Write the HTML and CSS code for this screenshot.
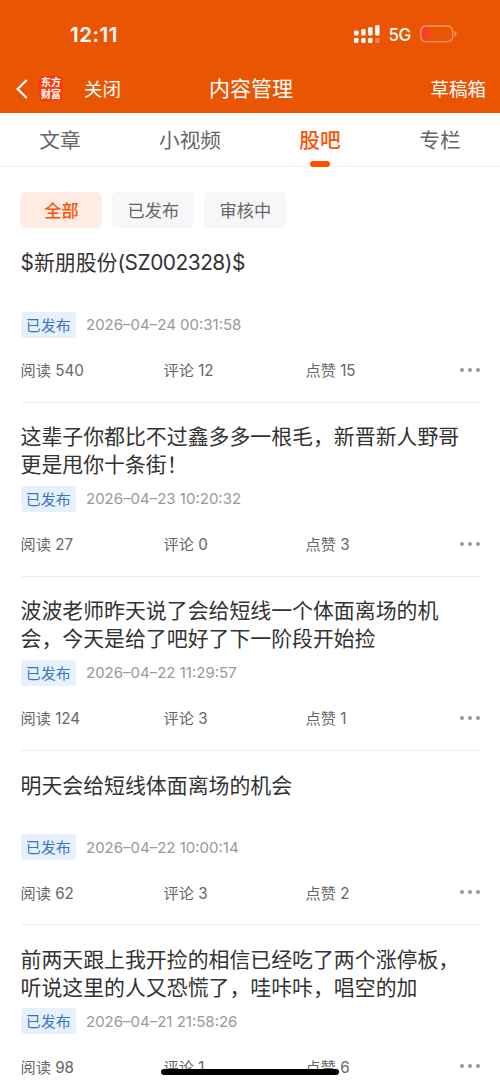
FILE: index.html
```html
<!DOCTYPE html>
<html lang="zh-CN">
<head>
    <meta charset="UTF-8">
    <meta name="viewport" content="width=device-width, initial-scale=1.0">
    <title>内容管理</title>
    <link rel="stylesheet" href="styles.css">
</head>
<body>
    <!-- Header Section -->
    <header>
        <div class="status-bar">
            <span class="time">12:11</span>
            <div class="status-icons">
                <svg class="signal" width="26" height="18" viewBox="0 0 26 18" fill="#fff">
                    <rect x="0" y="5.5" width="4.5" height="5" rx="1"/>
                    <rect x="7.3" y="4" width="4.3" height="6.5" rx="1"/>
                    <rect x="14.2" y="2.2" width="4.3" height="8.3" rx="1"/>
                    <rect x="21.2" y="0" width="4.3" height="10.5" rx="1"/>
                    <rect x="0" y="13" width="4.5" height="5" rx="1.2"/>
                    <rect x="7.3" y="13" width="4.3" height="5" rx="1.2"/>
                    <rect x="14.2" y="13" width="4.3" height="5" rx="1.2"/>
                    <rect x="21.2" y="13" width="4.3" height="5" rx="1.2" opacity="0.3"/>
                </svg>
                <span class="network">5G</span>
                <svg class="battery" width="38" height="18" viewBox="0 0 38 18">
                    <rect x="0.7" y="1" width="32" height="15.6" rx="5" fill="none" stroke="#f79a68" stroke-width="1.3"/>
                    <path d="M5 3h4v11.6H5a2.5 2.5 0 0 1-2.5-2.5V5.5A2.5 2.5 0 0 1 5 3z" fill="#ff3b30"/>
                    <path d="M34.6 6.2c2.6 1 2.6 4.4 0 5.4z" fill="#f79a68"/>
                </svg>
            </div>
        </div>
        <div class="nav-bar">
            <div class="nav-left">
                <svg class="back" width="12" height="20" viewBox="0 0 12 20">
                    <path d="M10.8 1L1.6 10l9.2 9" fill="none" stroke="#fff" stroke-width="2.2"/>
                </svg>
                <div class="logo">东方<br>财富</div>
                <span class="close">关闭</span>
            </div>
            <h1>内容管理</h1>
            <span class="drafts">草稿箱</span>
        </div>
    </header>

    <!-- Tabs -->
    <nav class="tabs">
        <a class="tab">文章</a>
        <a class="tab">小视频</a>
        <a class="tab active">股吧</a>
        <a class="tab">专栏</a>
    </nav>

    <!-- Filters -->
    <div class="filters">
        <span class="chip active">全部</span>
        <span class="chip">已发布</span>
        <span class="chip">审核中</span>
    </div>

    <!-- Post List -->
    <main class="posts">
        <article class="post">
            <h2>$新朋股份<span class="code">(SZ002328)$</span></h2>
            <div class="meta"><span class="badge">已发布</span><span class="date">2026–04–24 00:31:58</span></div>
            <div class="stats"><span>阅读 540</span><span>评论 12</span><span>点赞 15</span><i class="more"></i></div>
        </article>
        <article class="post">
            <h2>这辈子你都比不过鑫多多一根毛，新晋新人野哥<br>更是甩你十条街！</h2>
            <div class="meta"><span class="badge">已发布</span><span class="date">2026–04–23 10:20:32</span></div>
            <div class="stats"><span>阅读 27</span><span>评论 0</span><span>点赞 3</span><i class="more"></i></div>
        </article>
        <article class="post">
            <h2>波波老师昨天说了会给短线一个体面离场的机<br>会，今天是给了吧好了下一阶段开始捡</h2>
            <div class="meta"><span class="badge">已发布</span><span class="date">2026–04–22 11:29:57</span></div>
            <div class="stats"><span>阅读 124</span><span>评论 3</span><span>点赞 1</span><i class="more"></i></div>
        </article>
        <article class="post">
            <h2>明天会给短线体面离场的机会</h2>
            <div class="meta"><span class="badge">已发布</span><span class="date">2026–04–22 10:00:14</span></div>
            <div class="stats"><span>阅读 62</span><span>评论 3</span><span>点赞 2</span><i class="more"></i></div>
        </article>
        <article class="post">
            <h2>前两天跟上我开捡的相信已经吃了两个涨停板，<br>听说这里的人又恐慌了，哇咔咔，唱空的加</h2>
            <div class="meta"><span class="badge">已发布</span><span class="date">2026–04–21 21:58:26</span></div>
            <div class="stats"><span>阅读 98</span><span>评论 1</span><span>点赞 6</span><i class="more"></i></div>
        </article>
    </main>

    <div class="home-indicator"></div>
</body>
</html>
```

FILE: styles.css
```css
/* General Styles */
* {
    box-sizing: border-box;
}

body {
    margin: 0;
    height: 1084px;
    overflow: hidden;
    font-family: Inter, "Noto Sans CJK SC", sans-serif;
    background-color: #fff;
    color: #333;
}

/* Header */
header {
    height: 113px;
    background-color: #ea5504;
    color: #fff;
}

.status-bar {
    display: flex;
    justify-content: space-between;
    align-items: center;
    height: 68px;
    padding: 0 42px 0 70px;
}

.time {
    padding-top: 1px;
    font-size: 20.5px;
    font-weight: 600;
    letter-spacing: 0.5px;
}

.status-icons {
    display: flex;
    align-items: center;
}

.network {
    margin: 0 9px 0 8px;
    padding-top: 1px;
    font-size: 17px;
    font-weight: 500;
    letter-spacing: -0.3px;
}

.nav-bar {
    display: grid;
    grid-template-columns: 1fr auto 1fr;
    align-items: center;
    height: 41px;
    padding: 0 14px 0 16px;
}

.nav-left {
    display: flex;
    align-items: center;
}

.logo {
    width: 24px;
    height: 25px;
    margin: 0 21px 0 11px;
    border-radius: 4px;
    background-color: #fb3c0c;
    font-family: "Noto Sans CJK SC", sans-serif;
    font-size: 10px;
    font-weight: 700;
    line-height: 12px;
    text-align: center;
}

.close,
.drafts {
    font-size: 18.5px;
    line-height: 24px;
}

.nav-bar h1 {
    margin: 0;
    padding-top: 1px;
    font-size: 21px;
    font-weight: 400;
    line-height: 24px;
}

.drafts {
    text-align: right;
}

/* Tabs */
.tabs {
    display: flex;
    height: 54px;
    border-bottom: 1.5px solid #f2f2f3;
}

.tab {
    position: relative;
    display: flex;
    justify-content: center;
    width: 120px;
    padding-top: 1px;
    font-size: 20.7px;
    line-height: 54px;
    color: #666;
}

.tab:nth-child(2) {
    width: 140px;
}

.tab.active {
    color: #ff5000;
    font-weight: 500;
}

.tab.active::after {
    content: "";
    position: absolute;
    left: 50%;
    bottom: -1px;
    width: 20px;
    height: 6px;
    margin-left: -10px;
    border-radius: 3px;
    background-color: #ff5000;
}

/* Filters */
.filters {
    display: flex;
    gap: 10px;
    padding: 25px 20.4px 0;
}

.chip {
    width: 82px;
    height: 36px;
    border-radius: 5px;
    background-color: #f7f7fa;
    color: #666;
    font-size: 17.2px;
    line-height: 37px;
    text-align: center;
}

.chip.active {
    background-color: #ffece4;
    color: #ff5000;
    font-weight: 500;
}

/* Post List */
.posts {
    padding: 0.5px 20px 0 20.5px;
}

.post {
    height: 174.2px;
    padding-top: 20.5px;
    border-bottom: 1px solid #eee;
}

.post h2 {
    height: 56px;
    margin: 0 -10px 6.5px 0;
    font-size: 20.9px;
    font-weight: 400;
    line-height: 28px;
    white-space: nowrap;
}

.code {
    letter-spacing: -0.5px;
}

.meta {
    display: flex;
    align-items: center;
    gap: 10px;
}

.badge {
    width: 55.5px;
    height: 26px;
    border-radius: 4px;
    background-color: #e6f1fd;
    color: #3975bf;
    font-size: 15px;
    line-height: 27px;
    text-align: center;
}

.date {
    color: #999;
    font-size: 15px;
}

.stats {
    display: grid;
    grid-template-columns: 143px 142px 1fr auto;
    align-items: center;
    height: 24px;
    margin-top: 18.5px;
    color: #666;
    font-size: 15.2px;
    line-height: 24px;
}

.stats span {
    padding-top: 3px;
}

.more {
    width: 4px;
    height: 4px;
    margin: 0 8px 0 0;
    border-radius: 50%;
    background-color: #999;
    box-shadow: -8px 0 #999, 8px 0 #999;
}

/* Home Indicator */
.home-indicator {
    position: fixed;
    left: 161px;
    bottom: 9px;
    width: 178px;
    height: 6px;
    border-radius: 3px;
    background-color: #000;
}
```
